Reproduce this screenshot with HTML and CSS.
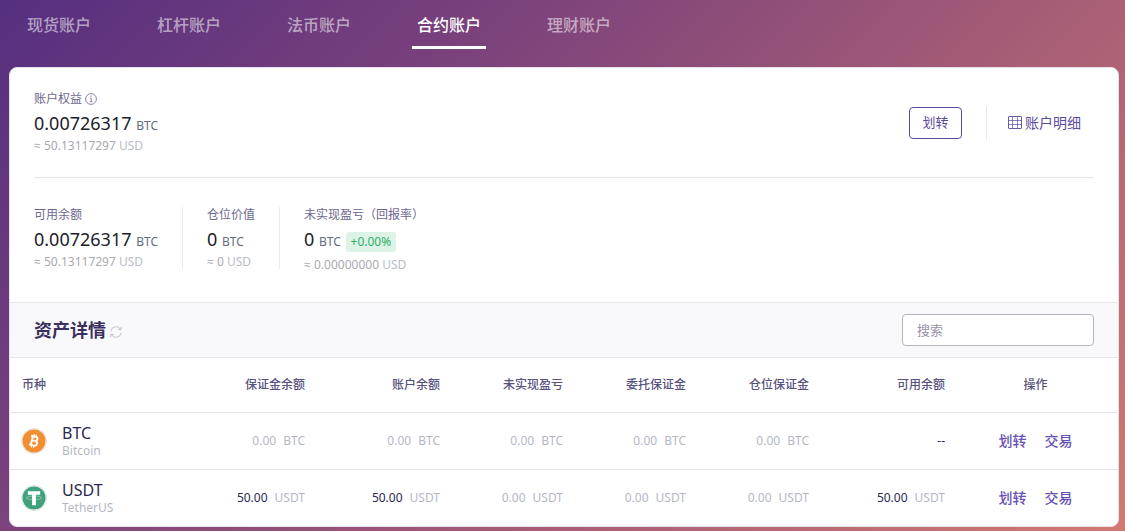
FILE: index.html
```html
<!DOCTYPE html>
<html lang="zh-CN">
<head>
<meta charset="utf-8">
<meta name="viewport" content="width=device-width, initial-scale=1">
<title>合约账户</title>
<link rel="stylesheet" href="styles.css">
</head>
<body>
<nav class="tabs">
  <a class="tab" href="#spot">现货账户</a>
  <a class="tab" href="#margin">杠杆账户</a>
  <a class="tab" href="#fiat">法币账户</a>
  <a class="tab tab-active" href="#futures" aria-current="page">合约账户</a>
  <a class="tab" href="#savings">理财账户</a>
</nav>
<main class="card">
  <section class="equity">
    <div class="stat">
      <div class="label">账户权益
        <svg class="info" viewBox="0 0 12 12" fill="none" stroke="currentColor" aria-hidden="true"><circle cx="6" cy="6" r="5.4" stroke-width=".8"/><path d="M5 5h1.2v3.6M4.7 8.7h2.8" stroke-width=".8"/><path d="M5.5 3.2h1.1" stroke-width="1"/></svg>
      </div>
      <div class="amount">0.00726317 <span class="unit">BTC</span></div>
      <div class="approx"><span class="sign">≈</span> 50.13117297 <span class="fiat">USD</span></div>
    </div>
    <div class="actions">
      <button class="transfer" type="button">划转</button>
      <a class="detail" href="#history">
        <svg class="grid-icon" viewBox="0 0 14 13" fill="none" stroke="currentColor" stroke-width=".9" aria-hidden="true"><rect x=".5" y=".5" width="13" height="12" rx=".5"/><path d="M.5 4.5h13M.5 8.5h13M4.5.5v12M9.5.5v12" stroke-width=".7"/></svg>
        <span>账户明细</span>
      </a>
    </div>
  </section>
  <section class="stats">
    <div class="stat">
      <div class="label">可用余额</div>
      <div class="amount">0.00726317 <span class="unit">BTC</span></div>
      <div class="approx"><span class="sign">≈</span> 50.13117297 <span class="fiat">USD</span></div>
    </div>
    <div class="stat">
      <div class="label">仓位价值</div>
      <div class="amount">0 <span class="unit">BTC</span></div>
      <div class="approx"><span class="sign">≈</span> 0 <span class="fiat">USD</span></div>
    </div>
    <div class="stat">
      <div class="label">未实现盈亏（回报率）</div>
      <div class="amount">0 <span class="unit">BTC</span> <span class="rate">+0.00%</span></div>
      <div class="approx"><span class="sign">≈</span> 0.00000000 <span class="fiat">USD</span></div>
    </div>
  </section>
  <header class="assets-head">
    <h2 class="title">资产详情</h2>
    <button class="refresh" type="button" aria-label="刷新">
      <svg class="refresh-icon" viewBox="0 0 12 12" fill="none" stroke="currentColor" stroke-width=".8"><path d="M.8 5.4A5.2 5.2 0 0 1 10.6 3.6M11.4.9 10.8 3.9 8 3.2M11.2 6.6A5.2 5.2 0 0 1 1.4 8.4M.6 11.1 1.2 8.1 4 8.8"/></svg>
    </button>
    <input class="search" type="search" placeholder="搜索" aria-label="搜索">
  </header>
  <table class="assets">
    <colgroup><col><col class="c-balance"><col class="c-balance"><col class="c-mid"><col class="c-mid"><col class="c-mid"><col class="c-free"><col class="c-ops"></colgroup>
    <thead>
      <tr><th>币种</th><th>保证金余额</th><th>账户余额</th><th>未实现盈亏</th><th>委托保证金</th><th>仓位保证金</th><th>可用余额</th><th>操作</th></tr>
    </thead>
    <tbody>
      <tr>
        <td><div class="coin">
          <svg class="coin-icon" viewBox="0 0 26 26" aria-hidden="true"><circle cx="13" cy="13" r="12.5" fill="#fffaf4" stroke="#e4ddd7"/><circle cx="13" cy="13" r="11.5" fill="#f18e31"/><g transform="rotate(13 13 13)" fill="none" stroke="#fff"><path d="M10.8 8.3v9.4M9 8.5h4.8a2 2 0 0 1 0 4.2h-3M13.8 12.7h.4a2.2 2.2 0 0 1 0 4.7H9" stroke-width="1.9"/><path d="M11.7 6.3v2M14 6.3v2M11.7 17.6v2.1M14 17.6v2.1" stroke-width="1.3"/></g></svg>
          <div><div class="symbol">BTC</div><div class="name">Bitcoin</div></div>
        </div></td>
        <td class="zero">0.00<span class="cur">BTC</span></td>
        <td class="zero">0.00<span class="cur">BTC</span></td>
        <td class="zero">0.00<span class="cur">BTC</span></td>
        <td class="zero">0.00<span class="cur">BTC</span></td>
        <td class="zero">0.00<span class="cur">BTC</span></td>
        <td>--</td>
        <td><div class="ops"><a href="#transfer-btc">划转</a><a href="#trade-btc">交易</a></div></td>
      </tr>
      <tr>
        <td><div class="coin">
          <svg class="coin-icon" viewBox="0 0 26 26" aria-hidden="true"><circle cx="13" cy="13" r="12.5" fill="#f5fcf8" stroke="#d5e2dc"/><circle cx="13" cy="13" r="11.5" fill="#40a17c"/><path d="M6.8 6.2h12.4v3.5h-4.3v10.6h-3.8V9.7H6.8z" fill="#fff"/><ellipse cx="13" cy="12.8" rx="7.8" ry="1.8" fill="none" stroke="#fff" stroke-width=".6" opacity=".6"/></svg>
          <div><div class="symbol">USDT</div><div class="name">TetherUS</div></div>
        </div></td>
        <td>50.00<span class="cur">USDT</span></td>
        <td>50.00<span class="cur">USDT</span></td>
        <td class="zero">0.00<span class="cur">USDT</span></td>
        <td class="zero">0.00<span class="cur">USDT</span></td>
        <td class="zero">0.00<span class="cur">USDT</span></td>
        <td>50.00<span class="cur">USDT</span></td>
        <td><div class="ops"><a href="#transfer-usdt">划转</a><a href="#trade-usdt">交易</a></div></td>
      </tr>
    </tbody>
  </table>
</main>
</body>
</html>
```
FILE: styles.css
```css
* { box-sizing: border-box; }

html {
  min-height: 100%;
  background: linear-gradient(135deg, #552f80 0%, #7c427b 32%, #ab6075 68%, #d07a72 100%);
}

body {
  margin: 0;
  padding: 0 6px 4px 9px;
  font-family: "Noto Sans", "Noto Sans CJK SC", sans-serif;
  font-size: 12px;
  line-height: 16px;
  color: #2b2752;
}

a { text-decoration: none; }

.tabs {
  display: flex;
  gap: 56px;
  padding: 0 13px 18px;
}

.tab {
  padding: 13px 5px 9px;
  border-bottom: 3px solid transparent;
  font-size: 16px;
  line-height: 24px;
  font-weight: 500;
  color: rgba(255, 255, 255, 0.55);
}

.tab-active {
  border-color: #fff;
  color: #fff;
}

.card {
  overflow: hidden;
  border: 1px solid #e6e2ec;
  border-radius: 8px;
  background: #fff;
}

.equity {
  display: flex;
  justify-content: space-between;
  align-items: center;
  margin: 0 24px;
  padding: 23px 0;
  border-bottom: 1px solid #e6e7ea;
}

.label {
  display: flex;
  align-items: center;
  gap: 3px;
  color: #6c6790;
}

.info {
  width: 12px;
  height: 12px;
}

.amount {
  padding: 4px 0 3px;
  font-size: 18px;
  line-height: 24px;
  color: #1c202b;
}

.unit {
  font-size: 12px;
  line-height: 16px;
  color: #626c80;
}

.approx { color: #aaaab0; }

.sign { font-family: "Open Sans", "Liberation Sans", sans-serif; }

.fiat { color: #b9bdc9; }

.actions {
  display: flex;
  align-items: center;
  gap: 24px;
}

.transfer {
  width: 53px;
  height: 32px;
  padding: 0 0 2px;
  border: 1px solid #5c4aa0;
  border-radius: 4px;
  background: #fff;
  font-family: inherit;
  font-size: 13px;
  color: #5c4aa0;
}

.detail {
  display: flex;
  align-items: center;
  gap: 3px;
  height: 34px;
  padding: 0 13px 0 21px;
  border-left: 1px solid #e6e7ea;
  font-size: 14px;
  color: #5c4aa0;
}

.grid-icon {
  width: 14px;
  height: 13px;
}

.stats {
  display: flex;
  align-items: flex-start;
  padding: 29px 24px 33px;
}

.stats .stat {
  height: 62px;
  padding-right: 24px;
}

.stats .stat + .stat {
  padding-left: 24px;
  border-left: 1px solid #e9e9ee;
}

.rate {
  display: inline-block;
  margin-bottom: 2px;
  padding: 0 5px;
  border-radius: 3px;
  background: #dcf3e6;
  font-size: 12px;
  line-height: 20px;
  color: #32b06c;
}

.assets-head {
  display: flex;
  align-items: center;
  height: 56px;
  padding: 0 24px;
  border: solid #e6e7ea;
  border-width: 1px 0;
  background: #f9f9fc;
}

.title {
  margin: 0;
  font-size: 18px;
  line-height: 24px;
  font-weight: 600;
  color: #39305f;
}

.refresh {
  display: flex;
  padding: 4px 4px 0;
  border: 0;
  background: none;
  color: #b4b4bf;
}

.refresh-icon {
  width: 12px;
  height: 12px;
}

.search {
  width: 192px;
  height: 32px;
  margin-left: auto;
  padding: 0 14px;
  border: 1px solid #b5b5c1;
  border-radius: 4px;
  background: #fff;
  font-family: inherit;
  font-size: 13px;
  color: #2b2752;
}

.search::placeholder { color: #9893aa; }

.assets {
  width: 100%;
  border-collapse: collapse;
  table-layout: fixed;
}

.c-balance { width: 135px; }
.c-mid { width: 123px; }
.c-free { width: 136px; }
.c-ops { width: 161px; }

.assets th,
.assets td {
  height: 57px;
  padding: 0 12px;
  text-align: right;
}

.assets th {
  height: 54px;
  font-weight: 500;
  color: #57527d;
}

.assets tbody tr { border-top: 1px solid #e4e4e8; }

.assets th:first-child,
.assets td:first-child { text-align: left; }

.assets th:last-child { text-align: center; }

.assets th:last-child,
.assets td:last-child { padding-right: 16px; }

.assets .zero,
.cur { color: #b5b7c5; }

.cur { margin-left: 7px; }

.coin {
  display: flex;
  align-items: center;
  gap: 15px;
}

.coin-icon {
  width: 26px;
  height: 26px;
  margin-left: -1px;
}

.symbol {
  font-size: 16px;
  line-height: 20px;
}

.name {
  line-height: 16px;
  color: #b5b7c5;
}

.ops {
  display: flex;
  justify-content: center;
  gap: 18px;
  font-size: 14px;
}

.ops a {
  font-weight: 500;
  color: #6650b5;
}
```
